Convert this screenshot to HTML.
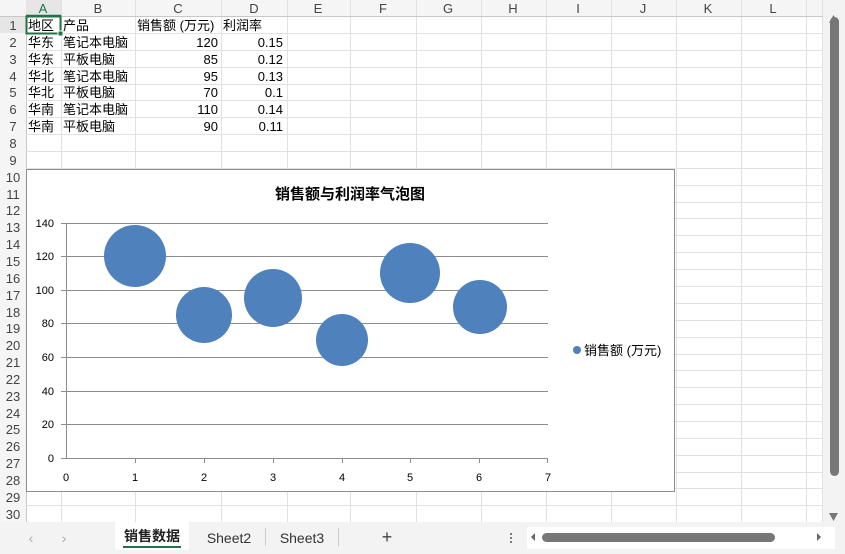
<!DOCTYPE html>
<html><head><meta charset="utf-8"><style>
html,body{margin:0;padding:0;width:845px;height:554px;overflow:hidden;background:#fff}
svg{display:block}
text{font-family:"Liberation Sans","Noto Sans CJK SC",sans-serif}
</style></head><body>
<svg width="845" height="554" viewBox="0 0 845 554" xmlns="http://www.w3.org/2000/svg">
<rect width="845" height="554" fill="#fff"/>
<!-- column header -->
<rect x="0" y="0" width="823" height="16" fill="#f5f5f5"/>
<rect x="0" y="16" width="26" height="510" fill="#f5f5f5"/>
<g stroke="#e1e1e1" stroke-width="1">
<line x1="61.5" y1="0" x2="61.5" y2="522"/><line x1="135.5" y1="0" x2="135.5" y2="522"/>
<line x1="221.5" y1="0" x2="221.5" y2="522"/><line x1="287.5" y1="0" x2="287.5" y2="522"/>
<line x1="350.5" y1="0" x2="350.5" y2="522"/><line x1="416.5" y1="0" x2="416.5" y2="522"/>
<line x1="481.5" y1="0" x2="481.5" y2="522"/><line x1="546.5" y1="0" x2="546.5" y2="522"/>
<line x1="611.5" y1="0" x2="611.5" y2="522"/><line x1="676.5" y1="0" x2="676.5" y2="522"/>
<line x1="741.5" y1="0" x2="741.5" y2="522"/><line x1="806.5" y1="0" x2="806.5" y2="522"/>
<line x1="822.5" y1="0" x2="822.5" y2="522"/>
</g>
<g stroke="#e1e1e1" stroke-width="1" id="rows"></g>
<line x1="0" y1="16.5" x2="823" y2="16.5" stroke="#c8c8c8"/>
<line x1="26.5" y1="0" x2="26.5" y2="522" stroke="#c8c8c8"/>
<rect x="26" y="0" width="35" height="16" fill="#e6e6e6"/>
<line x1="26" y1="15.5" x2="61" y2="15.5" stroke="#217346" stroke-width="1.5"/>
<rect x="0" y="17" width="26" height="16" fill="#e6e6e6"/>
<g font-size="13" fill="#444" text-anchor="middle">
<text x="43" y="13" fill="#217346">A</text><text x="98" y="13">B</text><text x="178" y="13">C</text><text x="254" y="13">D</text>
<text x="318" y="13">E</text><text x="383" y="13">F</text><text x="448" y="13">G</text><text x="513" y="13">H</text>
<text x="578" y="13">I</text><text x="643" y="13">J</text><text x="708" y="13">K</text><text x="773" y="13">L</text>
</g>
<g font-size="13" fill="#444" text-anchor="middle">
<text x="13" y="30">1</text><text x="13" y="47">2</text><text x="13" y="64">3</text><text x="13" y="81">4</text>
<text x="13" y="97">5</text><text x="13" y="114">6</text><text x="13" y="131">7</text><text x="13" y="148">8</text>
<text x="13" y="165">9</text><text x="13" y="182">10</text><text x="13" y="199">11</text><text x="13" y="215">12</text>
<text x="13" y="232">13</text><text x="13" y="249">14</text><text x="13" y="266">15</text><text x="13" y="283">16</text>
<text x="13" y="300">17</text><text x="13" y="317">18</text><text x="13" y="333">19</text><text x="13" y="350">20</text>
<text x="13" y="367">21</text><text x="13" y="384">22</text><text x="13" y="401">23</text><text x="13" y="418">24</text>
<text x="13" y="434">25</text><text x="13" y="451">26</text><text x="13" y="468">27</text><text x="13" y="485">28</text>
<text x="13" y="502">29</text><text x="13" y="519">30</text>
</g>
<!-- row lines -->
<g stroke="#e1e1e1">
<line x1="26" y1="33.5" x2="823" y2="33.5"/><line x1="26" y1="50.5" x2="823" y2="50.5"/><line x1="26" y1="67.5" x2="823" y2="67.5"/>
<line x1="26" y1="84.5" x2="823" y2="84.5"/><line x1="26" y1="100.5" x2="823" y2="100.5"/><line x1="26" y1="117.5" x2="823" y2="117.5"/>
<line x1="26" y1="134.5" x2="823" y2="134.5"/><line x1="26" y1="151.5" x2="823" y2="151.5"/><line x1="26" y1="168.5" x2="823" y2="168.5"/>
<line x1="26" y1="185.5" x2="823" y2="185.5"/><line x1="26" y1="202.5" x2="823" y2="202.5"/><line x1="26" y1="218.5" x2="823" y2="218.5"/>
<line x1="26" y1="235.5" x2="823" y2="235.5"/><line x1="26" y1="252.5" x2="823" y2="252.5"/><line x1="26" y1="269.5" x2="823" y2="269.5"/>
<line x1="26" y1="286.5" x2="823" y2="286.5"/><line x1="26" y1="303.5" x2="823" y2="303.5"/><line x1="26" y1="320.5" x2="823" y2="320.5"/>
<line x1="26" y1="337.5" x2="823" y2="337.5"/><line x1="26" y1="354.5" x2="823" y2="354.5"/><line x1="26" y1="370.5" x2="823" y2="370.5"/>
<line x1="26" y1="387.5" x2="823" y2="387.5"/><line x1="26" y1="404.5" x2="823" y2="404.5"/><line x1="26" y1="421.5" x2="823" y2="421.5"/>
<line x1="26" y1="438.5" x2="823" y2="438.5"/><line x1="26" y1="455.5" x2="823" y2="455.5"/><line x1="26" y1="472.5" x2="823" y2="472.5"/>
<line x1="26" y1="488.5" x2="823" y2="488.5"/><line x1="26" y1="505.5" x2="823" y2="505.5"/>
</g>
<!-- data -->
<g font-size="13" fill="#000">
<text x="28" y="30">地区</text><text x="63" y="30">产品</text><text x="137" y="30">销售额 (万元)</text><text x="223" y="30">利润率</text>
<text x="28" y="47">华东</text><text x="63" y="47">笔记本电脑</text>
<text x="28" y="64">华东</text><text x="63" y="64">平板电脑</text>
<text x="28" y="81">华北</text><text x="63" y="81">笔记本电脑</text>
<text x="28" y="97">华北</text><text x="63" y="97">平板电脑</text>
<text x="28" y="114">华南</text><text x="63" y="114">笔记本电脑</text>
<text x="28" y="131">华南</text><text x="63" y="131">平板电脑</text>
</g>
<g font-size="13" fill="#000" text-anchor="end">
<text x="218" y="47">120</text><text x="283" y="47">0.15</text>
<text x="218" y="64">85</text><text x="283" y="64">0.12</text>
<text x="218" y="81">95</text><text x="283" y="81">0.13</text>
<text x="218" y="97">70</text><text x="283" y="97">0.1</text>
<text x="218" y="114">110</text><text x="283" y="114">0.14</text>
<text x="218" y="131">90</text><text x="283" y="131">0.11</text>
</g>
<rect x="26.5" y="16.5" width="34" height="17" fill="none" stroke="#217346" stroke-width="2"/>
<rect x="58" y="31" width="5" height="5" fill="#217346" stroke="#fff"/>
<!-- chart -->
<rect x="26.5" y="169.5" width="648" height="322" fill="#fff" stroke="#8c8c8c"/>
<text x="350" y="199" font-size="15" font-weight="bold" text-anchor="middle" fill="#000">销售额与利润率气泡图</text>
<g stroke="#8c8c8c">
<line x1="66" y1="223.5" x2="548" y2="223.5"/><line x1="66" y1="256.5" x2="548" y2="256.5"/>
<line x1="66" y1="290.5" x2="548" y2="290.5"/><line x1="66" y1="323.5" x2="548" y2="323.5"/>
<line x1="66" y1="357.5" x2="548" y2="357.5"/><line x1="66" y1="391.5" x2="548" y2="391.5"/>
<line x1="66" y1="424.5" x2="548" y2="424.5"/><line x1="66" y1="458.5" x2="548" y2="458.5"/>
<line x1="66.5" y1="223" x2="66.5" y2="458"/>
<line x1="61" y1="223.5" x2="66" y2="223.5"/><line x1="61" y1="256.5" x2="66" y2="256.5"/><line x1="61" y1="290.5" x2="66" y2="290.5"/>
<line x1="61" y1="323.5" x2="66" y2="323.5"/><line x1="61" y1="357.5" x2="66" y2="357.5"/><line x1="61" y1="391.5" x2="66" y2="391.5"/>
<line x1="61" y1="424.5" x2="66" y2="424.5"/><line x1="61" y1="458.5" x2="66" y2="458.5"/>
<line x1="135.5" y1="458" x2="135.5" y2="463"/><line x1="204.5" y1="458" x2="204.5" y2="463"/><line x1="273.5" y1="458" x2="273.5" y2="463"/>
<line x1="342.5" y1="458" x2="342.5" y2="463"/><line x1="410.5" y1="458" x2="410.5" y2="463"/><line x1="479.5" y1="458" x2="479.5" y2="463"/>
<line x1="547.5" y1="458" x2="547.5" y2="463"/>
</g>
<g font-size="11" fill="#000" text-anchor="end">
<text x="54" y="227">140</text><text x="54" y="260">120</text><text x="54" y="294">100</text><text x="54" y="327">80</text>
<text x="54" y="361">60</text><text x="54" y="395">40</text><text x="54" y="428">20</text><text x="54" y="462">0</text>
</g>
<g font-size="11" fill="#000" text-anchor="middle">
<text x="66" y="481">0</text><text x="135" y="481">1</text><text x="204" y="481">2</text><text x="273" y="481">3</text>
<text x="342" y="481">4</text><text x="410" y="481">5</text><text x="479" y="481">6</text><text x="548" y="481">7</text>
</g>
<g fill="#4f81bd">
<circle cx="135" cy="256" r="31"/><circle cx="204" cy="315" r="28"/><circle cx="273" cy="298" r="29"/>
<circle cx="342" cy="340" r="26"/><circle cx="410" cy="273" r="30"/><circle cx="480" cy="307" r="27"/>
<circle cx="577" cy="350" r="4"/>
</g>
<text x="584" y="355" font-size="13" fill="#000">销售额 (万元)</text>
<!-- vertical scrollbar -->
<rect x="823" y="0" width="22" height="522" fill="#f3f3f3"/>
<path d="M829 23 L838 23 L833.5 15 Z" fill="#777"/>
<rect x="830" y="17" width="9" height="459" rx="4.5" fill="#777"/>
<path d="M829 513 L838 513 L833.5 521 Z" fill="#777"/>
<!-- tab bar -->
<rect x="0" y="522" width="845" height="32" fill="#f3f3f3"/>
<text x="31" y="543" font-size="14" fill="#aaa" text-anchor="middle">‹</text>
<text x="64" y="543" font-size="14" fill="#aaa" text-anchor="middle">›</text>
<rect x="72" y="522" width="44" height="0" fill="none"/>
<rect x="115" y="522" width="74" height="28" rx="3" fill="#fff"/>
<text x="152" y="541" font-size="14" font-weight="bold" fill="#222" text-anchor="middle">销售数据</text>
<rect x="123" y="546" width="58" height="2" fill="#217346"/>
<text x="229" y="543" font-size="14" fill="#333" text-anchor="middle">Sheet2</text>
<line x1="265.5" y1="528" x2="265.5" y2="546" stroke="#ccc"/>
<text x="302" y="543" font-size="14" fill="#333" text-anchor="middle">Sheet3</text>
<line x1="338.5" y1="528" x2="338.5" y2="546" stroke="#ccc"/>
<text x="387" y="543" font-size="18" fill="#444" text-anchor="middle">+</text>
<g fill="#555"><circle cx="511" cy="534" r="1"/><circle cx="511" cy="538" r="1"/><circle cx="511" cy="542" r="1"/></g>
<rect x="527" y="527" width="308" height="22" fill="#fff"/>
<path d="M535 533 L535 541 L531 537 Z" fill="#666"/>
<rect x="542" y="533" width="233" height="9" rx="4.5" fill="#777"/>
<path d="M817 533 L817 541 L821 537 Z" fill="#666"/>
</svg>
</body></html>
